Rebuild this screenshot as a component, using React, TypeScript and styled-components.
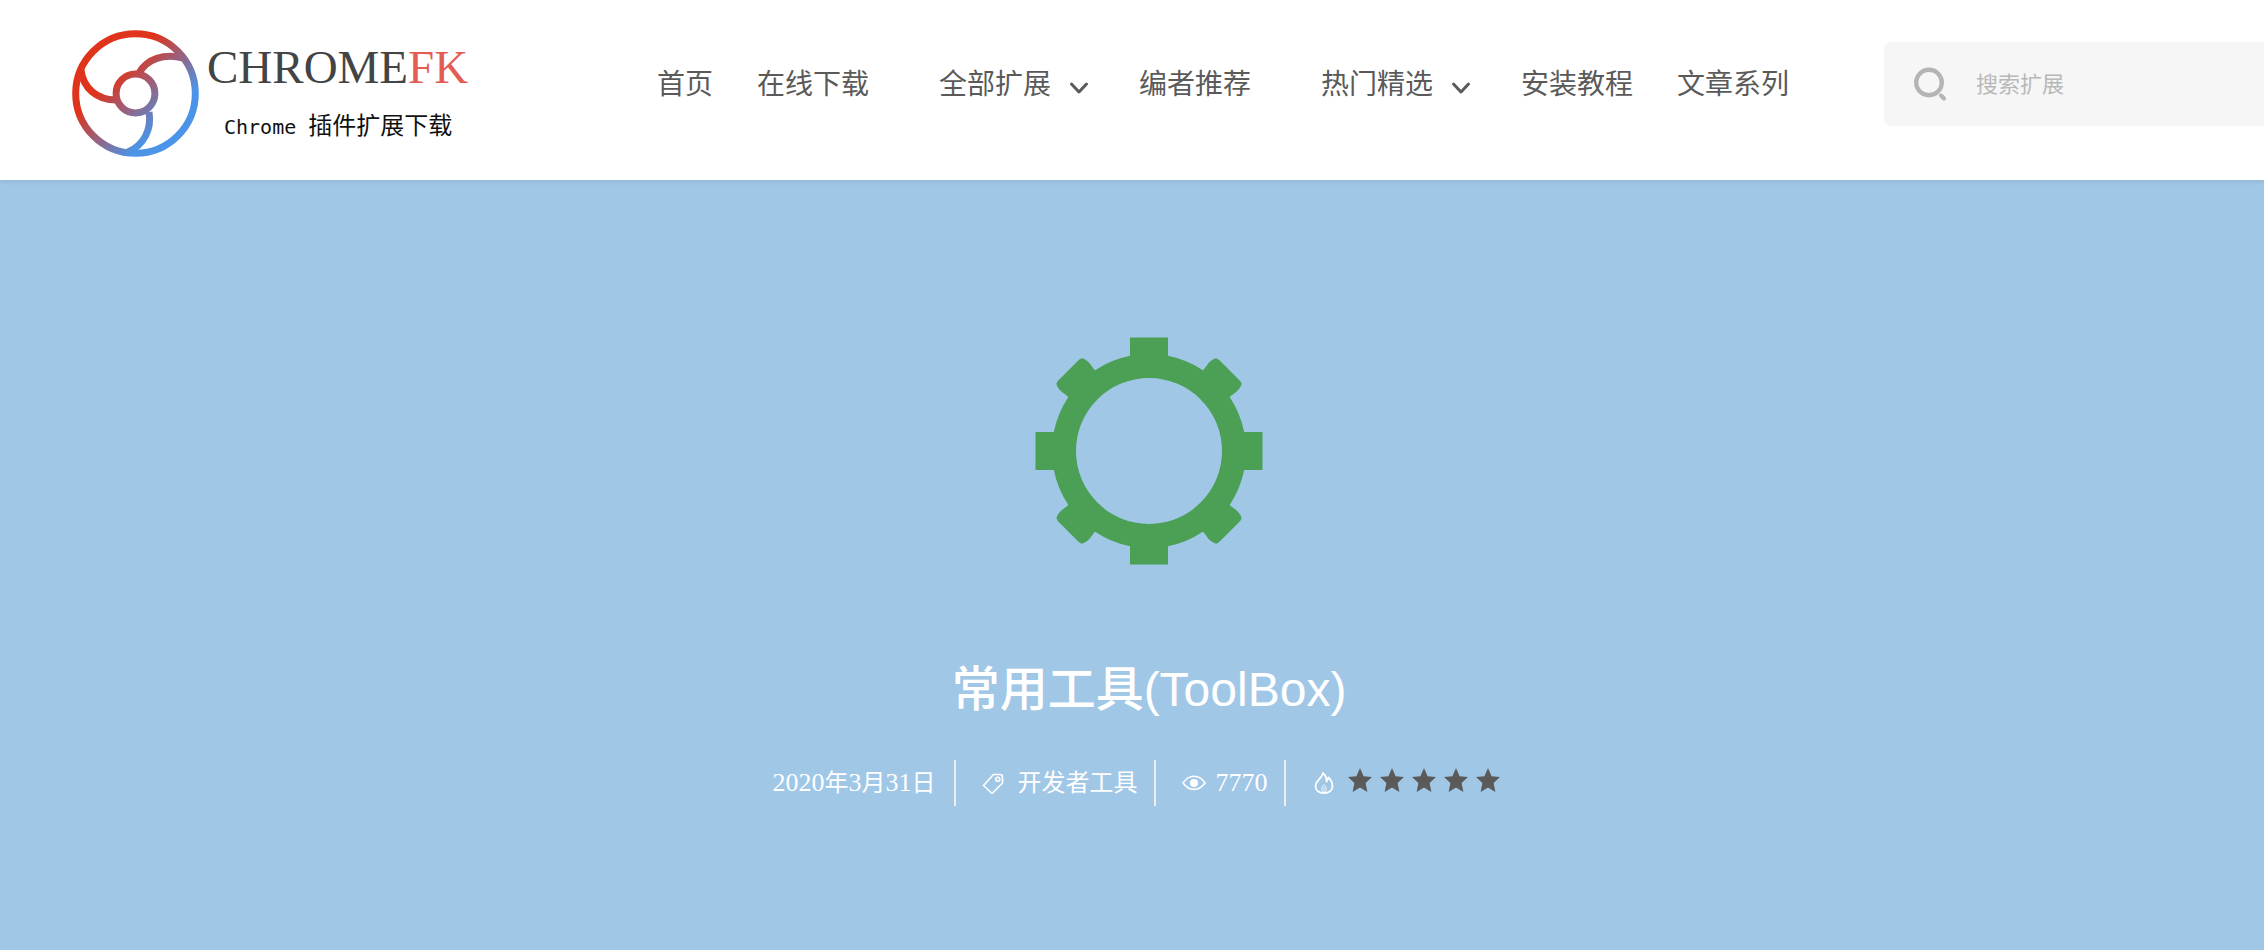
import React from "react";
import styled, { createGlobalStyle } from "styled-components";

const cjk = '"Noto Sans CJK SC", sans-serif';

const GlobalStyle = createGlobalStyle`
  *, *::before, *::after { box-sizing: border-box; }
  body {
    margin: 0;
    background: #fff;
    color: #5a5a5a;
    font-family: "Liberation Sans", ${cjk};
    overflow-x: hidden;
  }
  #root { min-height: 100vh; display: flex; flex-direction: column; }
`;

const Header = styled.header`
  position: relative;
  display: flex;
  align-items: flex-start;
  height: 180px;
  padding-left: 72px;
  background: #fff;
  box-shadow: 0 0 6px rgba(0, 0, 0, 0.16);
`;

const Brand = styled.a`
  display: flex;
  flex: none;
  gap: 8px;
  width: 585px;
  padding-top: 30px;
  color: #444;
  text-decoration: none;
`;

const BrandText = styled.span`
  display: flex;
  flex-direction: column;
  padding-top: 10px;
`;

const BrandName = styled.span`
  font: 47px/54px "Liberation Serif", serif;
  white-space: nowrap;
`;

const BrandAccent = styled.span`
  color: #e35d55;
`;

const Tagline = styled.span`
  padding: 12px 0 0 17px;
  color: #111;
  font: 24px/36px "Noto Sans CJK SC", sans-serif;
  white-space: nowrap;
`;

const TaglineLatin = styled.span`
  font: 20px "DejaVu Sans Mono", monospace;
`;

const Nav = styled.nav`
  flex: none;
  padding-top: 60px;
`;

const NavList = styled.ul`
  display: flex;
  margin: 0;
  padding: 0;
  gap: 44px;
  list-style: none;
`;

const NavItem = styled.li<{ $menu?: boolean }>`
  padding-left: ${({ $menu }) => ($menu ? "26px" : "0")};
  margin-right: ${({ $menu }) => ($menu ? "6px" : "0")};
`;

const NavLink = styled.a`
  display: flex;
  align-items: center;
  gap: 18px;
  color: #5a5a5a;
  font: 28px/44px ${cjk};
  text-decoration: none;
  white-space: nowrap;

  svg { margin-top: 12px; }
`;

const Search = styled.label`
  display: flex;
  flex: 1 0 380px;
  align-items: center;
  gap: 30px;
  height: 84px;
  margin: 42px 0 0 95px;
  padding-left: 30px;
  border-radius: 8px 0 0 8px;
  background: #f6f6f6;
`;

const SearchInput = styled.input`
  flex: 1;
  min-width: 0;
  padding: 0 0 4px;
  border: 0;
  outline: 0;
  background: transparent;
  color: #5a5a5a;
  font: 22px/32px ${cjk};

  &::placeholder { color: #b8b8b8; opacity: 1; }
`;

const Hero = styled.main`
  display: flex;
  flex: 1;
  flex-direction: column;
  align-items: center;
  padding: 157px 0 140px 34px;
  background: #a1c7e7;
  color: #fff;
`;

const Title = styled.h1`
  margin: 90px 0 35px;
  font: 500 48px/70px "Liberation Sans", ${cjk};
`;

const MetaList = styled.ul`
  display: flex;
  align-items: center;
  margin: 0;
  padding: 0 26px 0 0;
  list-style: none;
`;

const MetaItem = styled.li`
  display: flex;
  align-items: center;
  height: 46px;
  padding: 0 16px 0 26px;
  font: 24px/42px ${cjk};
  white-space: nowrap;

  & + & { border-left: 2px solid #eee; }
  &:first-child { padding: 0 18px 0 0; }
  &:last-child { padding-right: 0; }
`;

const DateText = styled.time`
  padding-bottom: 4px;
`;

const MetaLink = styled.a`
  display: flex;
  align-items: center;
  gap: 14px;
  padding-bottom: 4px;
  color: inherit;
  text-decoration: none;

  svg { margin-top: 6px; }
`;

const Figures = styled.span`
  font: 26px "Liberation Serif", serif;
`;

const Views = styled.span`
  display: flex;
  align-items: center;
  gap: 10px;
`;

const Rating = styled.span`
  display: flex;
  align-items: center;
  gap: 14px;
  padding-left: 2px;
`;

const Stars = styled.span`
  display: flex;
  gap: 8px;
  padding-bottom: 6px;
`;

const LogoMark = () => (
  <svg width="127" height="127" viewBox="0 0 127 127" fill="none" aria-hidden="true">
    <defs>
      <linearGradient id="mark" gradientUnits="userSpaceOnUse" x1="44" y1="44" x2="92" y2="92">
        <stop offset="0" stopColor="#df331b" />
        <stop offset="1" stopColor="#4b94e8" />
      </linearGradient>
    </defs>
    <g stroke="url(#mark)" strokeWidth="7">
      <circle cx="63.5" cy="63.5" r="59.8" />
      <circle cx="63.5" cy="63.5" r="19.4" />
      <path d="M67 43C75 29 92 23 111 28" />
      <path d="M9 40C11 58 25 70 44 70" />
      <path d="M77 82C80 99 72 115 56 122" />
    </g>
  </svg>
);

const Chevron = () => (
  <svg width="20" height="14" viewBox="0 0 20 14" fill="none" aria-hidden="true">
    <path d="M2.5 3l7.5 8 7.5-8" stroke="#5a5a5a" strokeWidth="3" strokeLinecap="round" strokeLinejoin="round" />
  </svg>
);

const SearchIcon = () => (
  <svg width="32" height="34" viewBox="0 0 32 34" fill="none" stroke="#b5b5b5" aria-hidden="true">
    <circle cx="15" cy="15.5" r="12.8" strokeWidth="4.4" />
    <path d="M27 28.500l3 3" strokeWidth="4" strokeLinecap="round" />
  </svg>
);

const Gear = () => (
  <svg width="228" height="228" viewBox="-114 -114 228 228" overflow="visible" role="img" aria-label="ToolBox">
    <g fill="#4ba056">
      <path
        fillRule="evenodd"
        d="M-97 0a97 97 0 1 0 194 0a97 97 0 1 0-194 0ZM-73 0a73 73 0 1 1 146 0a73 73 0 1 1-146 0Z"
      />
      <path d="M-19-113.500H19V-90H-19ZM-19 90H19V113.500H-19ZM-113.500-19H-90V19H-113.500ZM90-19H113.500V19H90Z" />
      {[45, 135, 225, 315].map((angle) => (
        <path
          key={angle}
          transform={`rotate(${angle})`}
          d="M-19-88V-97L-20-104Q-20-110-18-113L-15-114H15L18-113Q20-110 20-104L19-97V-88Z"
        />
      ))}
    </g>
  </svg>
);

const TagIcon = () => (
  <svg width="22" height="22" viewBox="0 0 22 22" fill="none" stroke="#fff" strokeWidth="1.600" aria-hidden="true">
    <path d="M11.500 1.500H18Q20.500 1.500 20.500 4V10L10 20.500 1.500 12.500Z" strokeLinejoin="round" />
    <circle cx="15.800" cy="6.300" r="2" />
  </svg>
);

const EyeIcon = () => (
  <svg width="24" height="16" viewBox="0 0 24 16" fill="none" stroke="#fff" strokeWidth="1.600" aria-hidden="true">
    <path d="M1 8C7-1 17-1 23 8C17 16.500 7 16.500 1 8Z" />
    <circle cx="12" cy="8" r="4" fill="#fff" stroke="none" />
  </svg>
);

const FlameIcon = () => (
  <svg width="20" height="22" viewBox="0 0 20 22" fill="none" stroke="#fff" aria-hidden="true">
    <path
      d="M9 1C8.500 6 1.500 8.500 1.500 14C1.500 18.500 5 21 10 21C15 21 18.500 18.500 18.500 14C18.500 10.500 16.500 7.500 14.500 5.500L12.500 9.500C12.500 6 11.500 3 9 1Z"
      strokeWidth="1.800"
      strokeLinejoin="round"
    />
    <path d="M8.500 20.500C7 16 8.500 13 10 13C11.500 13 13 16 11.500 20.500M10 15V20" strokeWidth="1" strokeOpacity="0.8" />
  </svg>
);

const StarIcon = () => (
  <svg width="24" height="24" viewBox="0 0 24 24" fill="#5a5a5a" aria-hidden="true">
    <path d="M12 0L15.600 8.200 24 9.100 17.600 15 19.400 24 12 19.500 4.600 24 6.400 15 0 9.100 8.400 8.200Z" />
  </svg>
);

const navItems = [
  { label: "首页" },
  { label: "在线下载" },
  { label: "全部扩展", menu: true },
  { label: "编者推荐" },
  { label: "热门精选", menu: true },
  { label: "安装教程" },
  { label: "文章系列" },
];

export default function App() {
  return (
    <>
      <GlobalStyle />
      <Header>
        <Brand href="#">
          <LogoMark />
          <BrandText>
            <BrandName>
              CHROME<BrandAccent>FK</BrandAccent>
            </BrandName>
            <Tagline>
              <TaglineLatin>Chrome </TaglineLatin>插件扩展下载
            </Tagline>
          </BrandText>
        </Brand>
        <Nav>
          <NavList>
            {navItems.map(({ label, menu }) => (
              <NavItem key={label} $menu={menu}>
                <NavLink href="#">
                  {label}
                  {menu && <Chevron />}
                </NavLink>
              </NavItem>
            ))}
          </NavList>
        </Nav>
        <Search>
          <SearchIcon />
          <SearchInput type="search" placeholder="搜索扩展" aria-label="搜索扩展" />
        </Search>
      </Header>
      <Hero>
        <Gear />
        <Title>常用工具(ToolBox)</Title>
        <MetaList>
          <MetaItem>
            <DateText dateTime="2020-03-31">
              <Figures>2020</Figures>年<Figures>3</Figures>月<Figures>31</Figures>日
            </DateText>
          </MetaItem>
          <MetaItem>
            <MetaLink href="#">
              <TagIcon />
              开发者工具
            </MetaLink>
          </MetaItem>
          <MetaItem>
            <Views>
              <EyeIcon />
              <Figures>7770</Figures>
            </Views>
          </MetaItem>
          <MetaItem>
            <Rating>
              <FlameIcon />
              <Stars role="img" aria-label="5 / 5">
                {[1, 2, 3, 4, 5].map((n) => (
                  <StarIcon key={n} />
                ))}
              </Stars>
            </Rating>
          </MetaItem>
        </MetaList>
      </Hero>
    </>
  );
}
